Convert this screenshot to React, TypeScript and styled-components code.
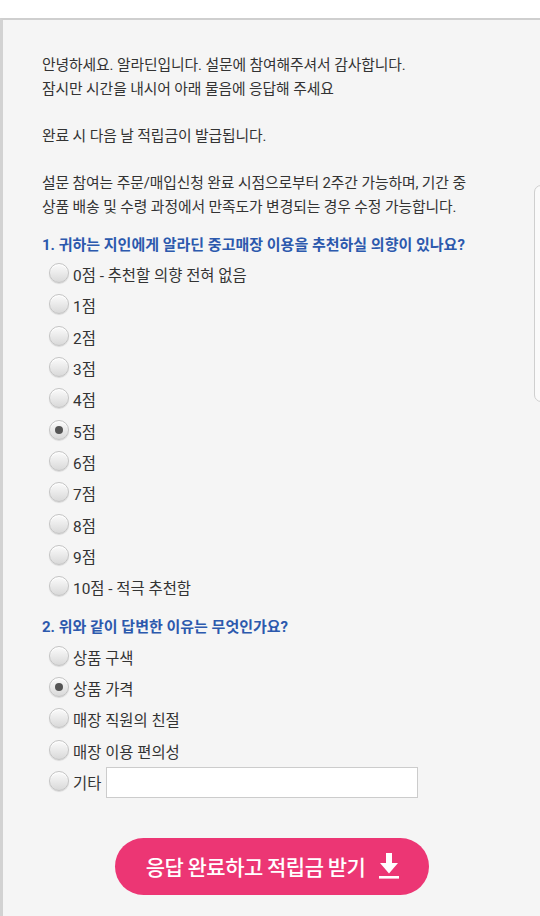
import React from "react";
import styled, { createGlobalStyle } from "styled-components";

const Global = createGlobalStyle`
  html, body { margin: 0; padding: 0; background: #ffffff; }
  body { font-family: Roboto, "Noto Sans CJK KR", sans-serif; }
`;

const Page = styled.div`
  padding-top: 18px;
  min-height: 916px;
  box-sizing: border-box;
  overflow: hidden;
  position: relative;
`;

const Panel = styled.main`
  background: #f5f5f5;
  border-top: 2px solid #cfcfcf;
  border-left: 3px solid #d2d2d2;
  min-height: 898px;
  box-sizing: border-box;
  padding: 34px 20px 30px 39px;
  display: flex;
  flex-direction: column;
`;

const Intro = styled.p`
  margin: 0;
  font-size: 14.8px;
  line-height: 23.6px;
  color: #333333;
  letter-spacing: -0.1px;
`;

const Question = styled.h3<{ $top: number }>`
  margin: ${(p) => p.$top}px 0 0 0;
  font-size: 15px;
  line-height: 20px;
  font-weight: 700;
  color: #2c59ad;
`;

const OptionList = styled.div<{ $top: number }>`
  display: flex;
  flex-direction: column;
  padding-left: 7px;
  margin-top: ${(p) => p.$top}px;
`;

const Option = styled.label`
  display: flex;
  align-items: center;
  height: 31.35px;
  font-size: 15.4px;
  color: #333333;
  gap: 4px;
`;

const Radio = styled.span<{ $checked?: boolean }>`
  width: 20px;
  height: 20px;
  border-radius: 50%;
  box-sizing: border-box;
  border: 1px solid #c4c4c4;
  background: linear-gradient(#fbfbfb, #d9d9d9);
  box-shadow: 0 1px 1px rgba(0, 0, 0, 0.12), inset 0 1px 0 #fff;
  display: flex;
  align-items: center;
  justify-content: center;
  flex-shrink: 0;
  transform: translateY(-2px);
  &::after {
    content: "";
    width: 8px;
    height: 8px;
    border-radius: 50%;
    background: #555;
    display: ${(p) => (p.$checked ? "block" : "none")};
  }
`;

const OptionText = styled.span`
  line-height: 20px;
  transform: translateY(1px);
`;

const TextInput = styled.input`
  width: 312px;
  height: 31px;
  box-sizing: border-box;
  border: 1px solid #cccccc;
  background: #ffffff;
  margin-left: 1px;
  outline: none;
`;

const ButtonRow = styled.div`
  display: flex;
  justify-content: center;
  margin-top: 39px;
  margin-left: -19px;
`;

const Submit = styled.button`
  width: 314px;
  height: 57px;
  border: none;
  border-radius: 29px;
  background: #ec3674;
  color: #ffffff;
  font-family: "Noto Sans CJK KR", sans-serif;
  font-size: 21px;
  font-weight: 500;
  letter-spacing: -0.5px;
  display: flex;
  align-items: center;
  justify-content: center;
  gap: 14px;
  padding: 0 0 0 2px;
  cursor: pointer;
`;

const SideTab = styled.div`
  position: absolute;
  right: -10px;
  top: 185px;
  width: 14px;
  height: 215px;
  border: 1px solid #cfcfcf;
  border-radius: 7px;
  background: #fafafa;
`;

const DownArrow = () => (
  <svg width="20" height="26" viewBox="0 0 20 26" aria-hidden="true">
    <rect x="7" y="0" width="6" height="11" fill="#fff" />
    <polygon points="1,10 19,10 10,20.5" fill="#fff" />
    <rect x="0" y="23" width="20" height="2.6" fill="#fff" />
  </svg>
);

const q1 = [
  "0점 - 추천할 의향 전혀 없음",
  "1점",
  "2점",
  "3점",
  "4점",
  "5점",
  "6점",
  "7점",
  "8점",
  "9점",
  "10점 - 적극 추천함",
];

const q2 = ["상품 구색", "상품 가격", "매장 직원의 친절", "매장 이용 편의성"];

export default function App() {
  return (
    <Page>
      <Global />
      <Panel>
        <Intro>
          안녕하세요. 알라딘입니다. 설문에 참여해주셔서 감사합니다.
          <br />
          잠시만 시간을 내시어 아래 물음에 응답해 주세요
          <br />
          <br />
          완료 시 다음 날 적립금이 발급됩니다.
          <br />
          <br />
          설문 참여는 주문/매입신청 완료 시점으로부터 2주간 가능하며, 기간 중
          <br />
          상품 배송 및 수령 과정에서 만족도가 변경되는 경우 수정 가능합니다.
        </Intro>

        <Question $top={16}>1. 귀하는 지인에게 알라딘 중고매장 이용을 추천하실 의향이 있나요?</Question>
        <OptionList $top={4}>
          {q1.map((t) => (
            <Option key={t}>
              <Radio $checked={t === "5점"} />
              <OptionText>{t}</OptionText>
            </Option>
          ))}
        </OptionList>

        <Question $top={13}>2. 위와 같이 답변한 이유는 무엇인가요?</Question>
        <OptionList $top={5}>
          {q2.map((t) => (
            <Option key={t}>
              <Radio $checked={t === "상품 가격"} />
              <OptionText>{t}</OptionText>
            </Option>
          ))}
          <Option>
            <Radio />
            <OptionText>기타</OptionText>
            <TextInput type="text" />
          </Option>
        </OptionList>

        <ButtonRow>
          <Submit type="button">
            응답 완료하고 적립금 받기
            <DownArrow />
          </Submit>
        </ButtonRow>
      </Panel>
      <SideTab />
    </Page>
  );
}
